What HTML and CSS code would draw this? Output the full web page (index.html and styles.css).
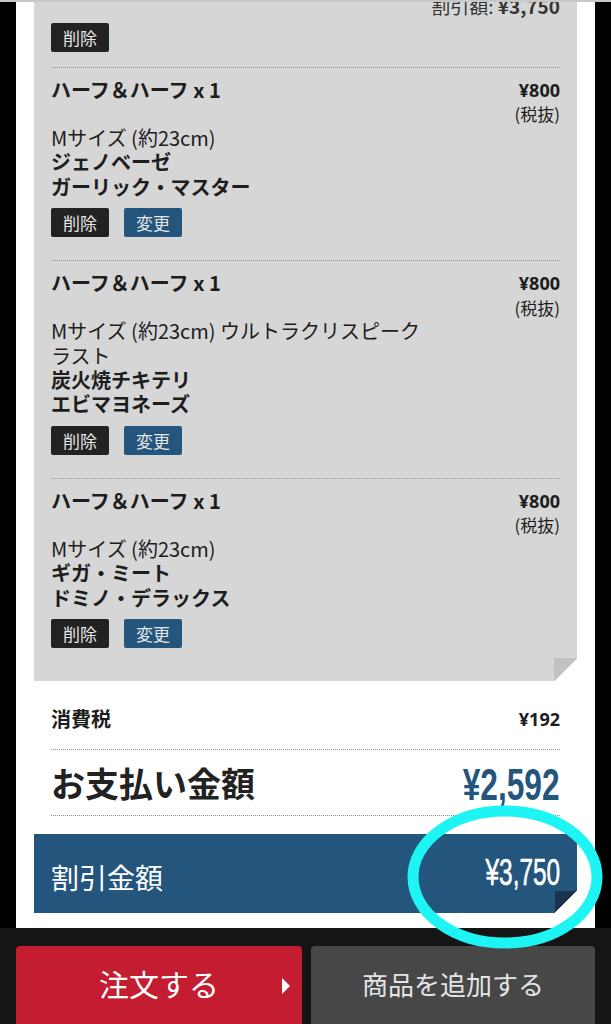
FILE: index.html
```html
<!DOCTYPE html>
<html lang="ja">
  <head>
    <meta charset="utf-8" />
    <meta name="viewport" content="width=device-width, initial-scale=1" />
    <title>カート</title>
    <link rel="stylesheet" href="styles.css">
  </head>
  <body>
    <div class="topbar"></div>
    <main class="cart">
      <div class="sheet">
        <div class="items">
          <section class="coupon">
            <p class="coupon-amount">割引額: <b>¥3,750</b></p>
            <div class="actions">
              <button class="btn btn-delete">削除</button>
            </div>
          </section>

          <section class="item">
            <div class="item-head">
              <h3 class="item-name">ハーフ＆ハーフ x 1</h3>
              <div class="item-price"><b>¥800</b><span>(税抜)</span></div>
            </div>
            <p class="item-desc">Mサイズ (約23cm)</p>
            <p class="item-topping">ジェノベーゼ</p>
            <p class="item-topping">ガーリック・マスター</p>
            <div class="actions">
              <button class="btn btn-delete">削除</button>
              <button class="btn btn-edit">変更</button>
            </div>
          </section>

          <section class="item">
            <div class="item-head">
              <h3 class="item-name">ハーフ＆ハーフ x 1</h3>
              <div class="item-price"><b>¥800</b><span>(税抜)</span></div>
            </div>
            <p class="item-desc">Mサイズ (約23cm) ウルトラクリスピークラスト</p>
            <p class="item-topping">炭火焼チキテリ</p>
            <p class="item-topping">エビマヨネーズ</p>
            <div class="actions">
              <button class="btn btn-delete">削除</button>
              <button class="btn btn-edit">変更</button>
            </div>
          </section>

          <section class="item last">
            <div class="item-head">
              <h3 class="item-name">ハーフ＆ハーフ x 1</h3>
              <div class="item-price"><b>¥800</b><span>(税抜)</span></div>
            </div>
            <p class="item-desc">Mサイズ (約23cm)</p>
            <p class="item-topping">ギガ・ミート</p>
            <p class="item-topping">ドミノ・デラックス</p>
            <div class="actions">
              <button class="btn btn-delete">削除</button>
              <button class="btn btn-edit">変更</button>
            </div>
          </section>
        </div>

        <div class="summary">
          <div class="tax-row">
            <span class="tax-label">消費税</span>
            <span class="tax-price">¥192</span>
          </div>
          <div class="total-row">
            <span class="total-label">お支払い金額</span>
            <span class="total-price"><span class="narrow">¥2,592</span></span>
          </div>
        </div>

        <div class="discount">
          <span class="discount-label">割引金額</span>
          <span class="discount-price"><span class="narrow">¥3,750</span></span>
        </div>
      </div>
    </main>

    <footer class="order-bar">
      <button class="order-btn order-submit">注文する<span class="arrow"></span></button>
      <button class="order-btn order-add">商品を追加する</button>
    </footer>

    <svg class="callout" width="611" height="1024" viewBox="0 0 611 1024">
      <ellipse cx="505" cy="877" rx="92" ry="66" fill="none" stroke="#1ff4f4" stroke-width="11" />
    </svg>
  </body>
</html>
```

FILE: styles.css
```css
:root {
  --ink: #1d1d1d;
  --gray-box: #d6d6d6;
  --blue: #23557d;
  --red: #c41d31;
  --jp: "Noto Sans CJK JP", sans-serif;
}
html,
body {
  margin: 0;
  background: #000;
  font-family: var(--jp);
  color: var(--ink);
  overflow: hidden;
}
*,
*:before,
*:after {
  box-sizing: border-box;
}
p,
h3 {
  margin: 0;
}
.topbar {
  position: fixed;
  top: 0;
  left: 0;
  right: 0;
  height: 2px;
  background: #c8c8c8;
  z-index: 2;
}
.cart {
  margin-top: -9px;
  padding: 0 16px;
}
.sheet {
  background: #fff;
  padding-bottom: 15px;
}
.items {
  position: relative;
  margin: 0 18px;
  padding: 0 17px;
  background: var(--gray-box);
}
/* folded corner */
.items:after {
  content: "";
  position: absolute;
  right: 0;
  bottom: 0;
  width: 23px;
  height: 23px;
  background: linear-gradient(to bottom right, #bfc3c3 50%, #fff 50%);
}
.coupon {
  padding-bottom: 15px;
}
.coupon-amount {
  text-align: right;
  font-size: 19px;
  line-height: 24px;
  height: 24px;
  padding-top: 3px;
  color: #333;
}
.actions {
  display: flex;
  gap: 15px;
  margin-top: 8px;
}
.btn {
  width: 58px;
  height: 29px;
  padding: 0;
  border: 0;
  border-radius: 2px;
  font-family: var(--jp);
  font-size: 17px;
  line-height: 29px;
  color: #e6e6e6;
}
.btn-delete {
  background: #222;
}
.btn-edit {
  background: var(--blue);
}
.item {
  border-top: 1px dotted #8e8e8e;
  padding: 10px 0 23px;
  font-size: 20px;
  line-height: 24.4px;
}
.item.last {
  padding-bottom: 33px;
}
.item-head {
  display: flex;
  justify-content: space-between;
  align-items: flex-start;
  height: 48px;
}
.item-name {
  font-size: 20px;
  font-weight: 700;
  line-height: 24.4px;
}
.item-price {
  display: flex;
  flex-direction: column;
  align-items: flex-end;
}
.item-price b {
  font-family: "Open Sans", sans-serif;
  font-size: 18px;
  line-height: 24.4px;
  height: 24.4px;
}
.item-price span {
  font-size: 17px;
  line-height: 24.4px;
  height: 24.4px;
}
.item-desc {
  max-width: 372px;
}
.item-topping {
  font-weight: 700;
}
.item .actions {
  margin-top: 9px;
}
.summary {
  padding: 26px 35px 0;
}
.tax-row {
  display: flex;
  justify-content: space-between;
  align-items: center;
  height: 43px;
  padding-bottom: 19px;
  border-bottom: 1px dotted #8e8e8e;
}
.tax-label {
  font-size: 20px;
  font-weight: 700;
  line-height: 24px;
}
.tax-price {
  font-family: "Open Sans", sans-serif;
  font-size: 18px;
  font-weight: 700;
  line-height: 24px;
}
.total-row {
  display: flex;
  justify-content: space-between;
  align-items: center;
  height: 66px;
  border-bottom: 1px dotted #8e8e8e;
}
.total-label {
  font-size: 34px;
  font-weight: 700;
  line-height: 40px;
  color: #222;
}
.narrow {
  display: inline-block;
  font-family: "Liberation Sans", sans-serif;
  transform: scaleX(0.72);
  transform-origin: right center;
}
.total-price {
  font-size: 44px;
  font-weight: 700;
  line-height: 50px;
  color: var(--blue);
}
.discount {
  position: relative;
  display: flex;
  justify-content: space-between;
  align-items: center;
  height: 79px;
  margin: 18px 18px 0;
  padding: 0 17px;
  background: var(--blue);
  color: #fff;
}
.discount:after {
  content: "";
  position: absolute;
  right: 0;
  bottom: 0;
  width: 22px;
  height: 22px;
  background: linear-gradient(to bottom right, #18334c 50%, #fff 50%);
}
.discount-label {
  font-size: 28px;
  line-height: 34px;
  padding-top: 6px;
}
.discount-price {
  font-size: 37px;
  line-height: 40px;
  padding-bottom: 6px;
}
.discount-price .narrow {
  transform: scaleX(0.66);
  -webkit-text-stroke: 0.6px #fff;
}
.order-bar {
  display: grid;
  grid-template-columns: 286px 284px;
  gap: 9px;
  padding: 18px 16px 0;
  background: #151515;
}
.order-btn {
  position: relative;
  height: 90px;
  padding: 0 0 16px;
  border: 0;
  border-radius: 4px;
  font-family: var(--jp);
  color: #fff;
}
.order-submit {
  background: var(--red);
  font-size: 30px;
}
.order-submit .arrow {
  position: absolute;
  right: 12px;
  top: 32px;
  border-left: 8px solid #fff;
  border-top: 8px solid transparent;
  border-bottom: 8px solid transparent;
}
.order-add {
  background: #474747;
  color: #e4e4e4;
  font-size: 26px;
}
.callout {
  position: absolute;
  top: 0;
  left: 0;
  pointer-events: none;
}
```
